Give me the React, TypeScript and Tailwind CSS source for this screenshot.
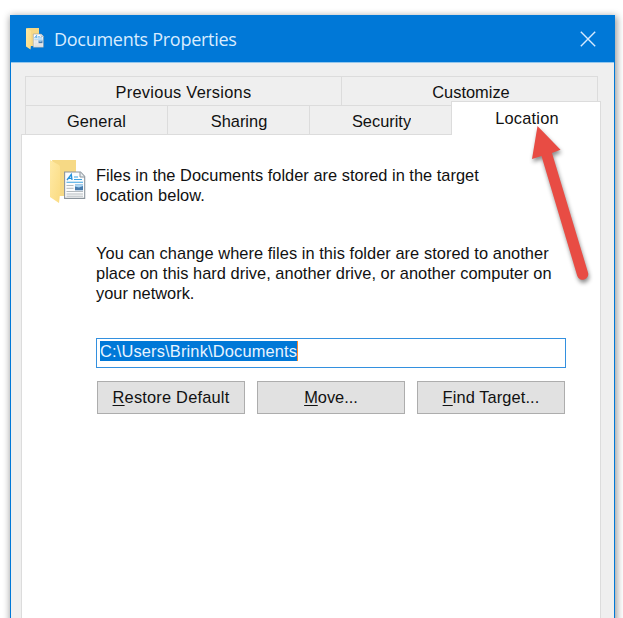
import React from "react";

const Line = ({ children, className = "" }: { children: React.ReactNode; className?: string }) => (
  <div className={`whitespace-nowrap ${className}`}>{children}</div>
);

const FolderIcon = ({ className }: { className: string }) => (
  <svg className={className} viewBox="0 0 38 44" fill="none">
    <defs>
      <linearGradient id="flap" x1="0" y1="0" x2="1" y2="1">
        <stop offset="0" stopColor="#ffeaa6" />
        <stop offset="1" stopColor="#fadb82" />
      </linearGradient>
    </defs>
    <path d="M2 0H26V36H9Z" fill="#f6d985" />
    <path d="M0 0L9 5Q10 5.500 10 7.500V34L9 43L0 37Z" fill="url(#flap)" />
    <path d="M14.600 12H30.500L34.700 16.500V38.400H14.600Z" fill="#fbfcfd" stroke="#8b949c" strokeWidth="1.100" />
    <path d="M30 12V17H34.700" fill="#e8edf0" stroke="#8b949c" />
    <path d="M17 20L21.300 14.500L22 20M18.500 18.300H22" stroke="#2692dc" strokeWidth="1.300" />
    <path d="M24 17H28M24 19.500H32M16.500 22.300H33" stroke="#3da3e2" strokeWidth="1.100" />
    <path d="M25 24.500H33V30.300H25Z" fill="#477bad" />
    <path d="M25 24.500H33V26L29 27.500L25 26.500Z" fill="#a9d5f4" />
    <path d="M16.500 25.500H23.500M16.500 28.300H23.500M16.500 31.500H33M16.500 34H33M16.500 36.200H33" stroke="#b4babe" />
  </svg>
);

const Tab = ({ label, className = "" }: { label: string; className?: string }) => (
  <div className={`flex justify-center border-[#dcdcdc] bg-[#efefef] leading-[30px] ${className}`}>
    <span className="h-[24px] overflow-hidden whitespace-nowrap">{label}</span>
  </div>
);

const ActionButton = ({ mnemonic, rest, className }: { mnemonic: string; rest: string; className: string }) => (
  <button className={`h-[33px] w-[148px] border border-[#adadad] bg-[#e1e1e1] leading-[31px] ${className}`}>
    <span className="underline decoration-1 underline-offset-2">{mnemonic}</span>
    {rest}
  </button>
);

export default function App() {
  return (
    <div className="relative h-[618px] w-[623px] overflow-hidden bg-white pl-[10px] pt-[15px] font-['Liberation_Sans',Arial,sans-serif] text-[16.4px] text-[#111]">
      <div className="flex h-[620px] w-[605px] flex-col border border-[#0078d7] bg-[#efefef] shadow-[1px_2px_7px_1px_rgba(0,0,0,0.4)]">
        <header className="flex h-[46px] shrink-0 items-center bg-[#0078d7] pl-[15px]">
          <FolderIcon className="h-[22px] w-[19px]" />
          <h1 className="ml-[9px] whitespace-nowrap font-['Open_Sans',sans-serif] text-[18px] font-normal leading-[24px] tracking-[-0.28px] text-[#d8ecff]">
            Documents Properties
          </h1>
          <svg className="ml-auto mr-[18px] h-4 w-4" viewBox="0 0 16 16">
            <path d="M.8.800L15.200 15.200M15.200.800L.8 15.200" stroke="#d5eaff" strokeWidth="1.400" />
          </svg>
        </header>
        <div className="border-t border-[#94c7ed] pt-[13px]">
          <div className="ml-[14px] flex w-[573px] border border-b-0 border-[#dcdcdc]">
            <Tab label="Previous Versions" className="h-[28px] w-[316px] border-r tracking-[0.28px]" />
            <Tab label="Customize" className="h-[28px] w-[255px] pl-[3px]" />
          </div>
          <div className="ml-[14px] flex h-[29px]">
            <Tab label="General" className="h-[29px] w-[143px] border-x border-t tracking-[0.1px]" />
            <Tab label="Sharing" className="h-[29px] w-[142px] border-r border-t pl-px" />
            <Tab label="Security" className="h-[29px] w-[141px] border-t pl-[2px]" />
            <div className="relative z-10 -mt-[4px] flex h-[34px] w-[150px] shrink-0 justify-center border border-b-0 border-[#dcdcdc] bg-white pl-[2px] leading-[33px] tracking-[0.2px]">
              Location
            </div>
          </div>
        </div>
        <main className="ml-[10px] h-[500px] w-[580px] border border-[#dcdcdc] bg-white pl-[28px] pt-[25px]">
          <div className="flex">
            <FolderIcon className="h-[44px] w-[38px] shrink-0" />
            <div className="ml-[8px] mt-[5px] leading-[20px]">
              <Line className="tracking-[0.02px]">Files in the Documents folder are stored in the target</Line>
              <Line className="tracking-[0.1px]">location below.</Line>
              <div className="mt-[38px]">
                <Line className="tracking-[0.05px]">You can change where files in this folder are stored to another</Line>
                <Line className="tracking-[0.03px]">place on this hard drive, another drive, or another computer on</Line>
                <Line>your network.</Line>
              </div>
            </div>
          </div>
          <div className="ml-[46px] mt-[35px] flex h-[30px] w-[470px] items-start border border-[#3390df] pl-[3px] pt-[2px]">
            <span className="h-[20px] whitespace-nowrap border-r border-[#ff8728] bg-[#0078d7] leading-[20px] tracking-[0.17px] text-[#e8f4ff]">C:\Users\Brink\Documents</span>
          </div>
          <div className="ml-[47px] mt-[13px] flex gap-[12px]">
            <ActionButton mnemonic="R" rest="estore Default" className="tracking-[0.2px]" />
            <ActionButton mnemonic="M" rest="ove..." className="" />
            <ActionButton mnemonic="F" rest="ind Target..." className="tracking-[0.1px]" />
          </div>
        </main>
      </div>
      <svg className="absolute left-[520px] top-[115px] z-20 h-[180px] w-[80px] drop-shadow-[1px_3px_2px_rgba(0,0,0,0.45)]" viewBox="0 0 80 180">
        <path d="M17.500 11L40.500 34.700L32 38L68 157.500A5.600 5.600 0 0 1 57.200 160.800L21.500 41L12 44Z" fill="#e84c44" />
      </svg>
    </div>
  );
}
